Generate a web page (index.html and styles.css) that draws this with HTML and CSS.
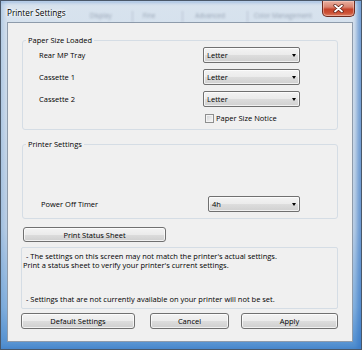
FILE: index.html
```html
<!DOCTYPE html>
<html>
<head>
<meta charset="utf-8">
<link rel="stylesheet" href="styles.css">
</head>
<body>
<div class="window">
  <div class="titlebar">
    <span class="title">Printer Settings</span>
    <div class="ghost-tabs">
      <span class="t1">Display</span>
      <span class="t2">Fine</span>
      <span class="t3">Advanced</span>
      <span class="t4">Color Management</span>
    </div>
    <div class="close">
      <svg width="11" height="9" viewBox="0 0 11 9"><path d="M2 1.5 L9 7.5 M9 1.5 L2 7.5" stroke="#5a1c12" stroke-width="3.2" stroke-linecap="round"/><path d="M2 1.5 L9 7.5 M9 1.5 L2 7.5" stroke="#ffffff" stroke-width="1.8" stroke-linecap="round"/></svg>
    </div>
  </div>
  <div class="client">
    <div class="group g1">
      <div class="legend">Paper Size Loaded</div>
      <div class="row r1"><span class="label">Rear MP Tray</span><div class="combo"><span>Letter</span><i class="arrow"></i></div></div>
      <div class="row r2"><span class="label">Cassette 1</span><div class="combo"><span>Letter</span><i class="arrow"></i></div></div>
      <div class="row r3"><span class="label">Cassette 2</span><div class="combo"><span>Letter</span><i class="arrow"></i></div></div>
      <div class="row check-row"><span></span><div class="check"><span class="cb"></span><span>Paper Size Notice</span></div></div>
    </div>
    <div class="group g2">
      <div class="legend">Printer Settings</div>
      <div class="row r4"><span class="label">Power Off Timer</span><div class="combo"><span>4h</span><i class="arrow"></i></div></div>
    </div>
    <div class="btn status">Print Status Sheet</div>
    <div class="info">
      <p class="dash">- The settings on this screen may not match the printer's actual settings.</p>
      <p>Print a status sheet to verify your printer's current settings.</p>
      <p class="dash last">- Settings that are not currently available on your printer will not be set.</p>
    </div>
    <div class="buttons">
      <div class="btn b-default">Default Settings</div>
      <div class="btn b-cancel">Cancel</div>
      <div class="btn b-apply">Apply</div>
    </div>
  </div>
</div>
</body>
</html>
```
FILE: styles.css
```css
html, body {
  margin: 0;
  padding: 0;
  background: #ffffff;
}
body {
  font-family: "Open Sans", "Liberation Sans", sans-serif;
  font-size: 7.5px;
  color: #000;
}
.window {
  width: 362px;
  height: 350px;
  box-sizing: border-box;
  border: 1px solid #4a5869;
  background: linear-gradient(180deg, #d8e3ee 0%, #cddbea 35%, #bcd0e6 65%, #86b2de 88%, #4f8ed0 100%);
  box-shadow: inset -4px 0 4px rgba(50, 115, 195, 0.6), inset 3px 0 4px rgba(80, 140, 205, 0.25), inset 0 1px 0 #eef3f8;
  display: flex;
  flex-direction: column;
}
.titlebar {
  height: 21px;
  display: flex;
  align-items: flex-start;
  flex: none;
}
.title {
  padding: 6px 0 0 6px;
  font-size: 8.2px;
  line-height: 11px;
  white-space: nowrap;
  text-shadow: 0 0 5px #ffffff, 0 0 3px #ffffff, 0 0 2px #ffffff;
}
.ghost-tabs {
  display: flex;
  padding-top: 10px;
  font-size: 6.5px;
  color: rgba(55, 70, 95, 0.4);
  filter: blur(0.8px);
  white-space: nowrap;
  overflow: hidden;
  width: 250px;
  margin-right: -250px;
}
.ghost-tabs span {
  border-right: 1px solid rgba(90, 105, 130, 0.25);
  height: 11px;
}
.t1 { margin-left: 24px; padding-right: 20px; }
.t2 { padding-left: 10px; padding-right: 27px; }
.t3 { padding-left: 12px; padding-right: 22px; }
.t4 { padding-left: 6px; border-right: none !important; }
.close {
  margin-left: auto;
  margin-right: 6px;
  width: 33px;
  height: 16px;
  box-sizing: border-box;
  border: 1px solid #6e2b1f;
  border-top: none;
  border-radius: 0 0 5px 5px;
  background: linear-gradient(180deg, #eab0a0 0%, #d98470 40%, #c6432a 55%, #cc5236 80%, #de8266 100%);
  box-shadow: inset 0 0 0 1px rgba(255, 220, 210, 0.45);
  display: flex;
  align-items: center;
  justify-content: center;
}
.client {
  margin: 0 8px 0 6px;
  height: 320px;
  box-sizing: border-box;
  border: 1px solid #8e9bab;
  background: #f0f0f0;
  padding: 0 14px;
  display: flex;
  flex-direction: column;
  flex: none;
}
.group {
  box-sizing: border-box;
  border: 1px solid #d5dde5;
  border-radius: 3px;
  display: flex;
  flex-direction: column;
  flex: none;
}
.legend {
  margin: -6px 0 0 3px;
  padding: 0 2px;
  height: 11px;
  line-height: 11px;
  background: #f0f0f0;
  align-self: flex-start;
  white-space: nowrap;
}
.g1 {
  margin-top: 17px;
  height: 90px;
}
.g2 {
  margin-top: 14px;
  height: 75px;
}
.row {
  display: grid;
  grid-template-columns: 164px 97px;
  align-items: center;
  height: 16px;
  padding-left: 16px;
}
.g2 .row {
  grid-template-columns: 167px 92px;
  padding-left: 18px;
}
.r1 { margin-top: 1px; }
.r2 { margin-top: 6px; }
.r3 { margin-top: 6px; }
.r4 { margin-top: 46px; }
.check-row {
  margin-top: 6px;
  height: 9px;
}
.label {
  white-space: nowrap;
  line-height: 10px;
}
.combo {
  height: 16px;
  box-sizing: border-box;
  border: 1px solid #707070;
  border-radius: 2px;
  background: linear-gradient(180deg, #f3f3f3 0%, #ebebeb 50%, #dddddd 51%, #d0d0d0 100%);
  box-shadow: inset 0 0 0 1px rgba(255, 255, 255, 0.7);
  display: flex;
  align-items: center;
  justify-content: space-between;
  padding: 0 3px 0 3px;
  line-height: 10px;
}
.arrow {
  width: 0;
  height: 0;
  border-left: 2.5px solid transparent;
  border-right: 2.5px solid transparent;
  border-top: 3px solid #000;
  margin-top: 1px;
}
.check {
  display: flex;
  align-items: center;
  gap: 2px;
  margin-left: 2px;
  white-space: nowrap;
  line-height: 10px;
}
.cb {
  width: 9px;
  height: 9px;
  box-sizing: border-box;
  border: 1px solid #8e8f8f;
  background: linear-gradient(135deg, #cdd1d6 0%, #eaeaea 60%, #f8f8f8 100%);
  box-shadow: inset 0 0 0 1px #f4f4f4;
  flex: none;
}
.btn {
  box-sizing: border-box;
  border: 1px solid #707070;
  border-radius: 3px;
  background: linear-gradient(180deg, #f3f3f3 0%, #ebebeb 50%, #dddddd 51%, #cfcfcf 100%);
  box-shadow: inset 0 0 0 1px rgba(255, 255, 255, 0.7);
  display: flex;
  align-items: center;
  justify-content: center;
  white-space: nowrap;
  line-height: 10px;
  flex: none;
}
.status {
  margin-top: 8px;
  margin-left: 1px;
  width: 143px;
  height: 15px;
}
.info {
  margin-top: 5px;
  margin-left: -1px;
  width: 317px;
  height: 62px;
  box-sizing: border-box;
  border: 1px solid #d5dde5;
  border-radius: 2px;
  padding: 4px 0 0 1px;
  line-height: 9px;
  flex: none;
}
.info p {
  margin: 0;
  white-space: nowrap;
}
.info .dash {
  padding-left: 3px;
}
.info .last {
  margin-top: 25px;
}
.buttons {
  display: flex;
  margin-top: 4px;
  margin-left: -1px;
}
.buttons .btn {
  height: 16px;
}
.b-default { width: 114px; }
.b-cancel { width: 79px; margin-left: 15px; }
.b-apply { width: 97px; margin-left: 12px; }
```
